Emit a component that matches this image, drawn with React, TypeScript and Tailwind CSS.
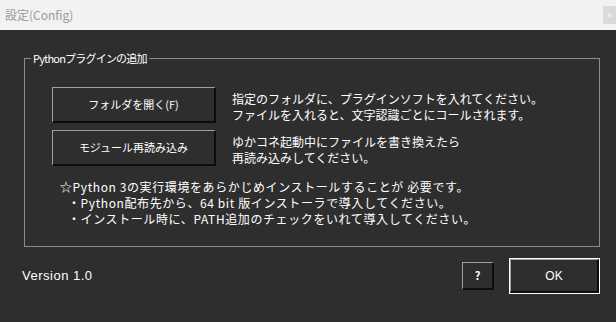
import React from "react";

const bevel =
  "border-t border-l border-t-[#a0a0a0] border-l-[#a0a0a0] border-b-2 border-r-2 border-b-[#0c0c0c] border-r-[#0c0c0c] bg-[#2e2e2e] text-white";

const Row: React.FC<{ label: string; lines: string[]; className?: string }> = ({
  label,
  lines,
  className = "",
}) => (
  <div className={`flex items-end gap-[16px] ${className}`}>
    <button
      className={`${bevel} w-[164px] h-[36px] shrink-0 text-[11px] leading-none`}
    >
      {label}
    </button>
    <div className="text-[12px] leading-[16px] text-white">
      {lines.map((l) => (
        <div key={l}>{l}</div>
      ))}
    </div>
  </div>
);

export default function App() {
  return (
    <div className="w-[616px] h-[322px] bg-[#2e2e2e] flex flex-col overflow-hidden font-['Noto_Sans_CJK_JP',sans-serif]">
      {/* title bar */}
      <div className="h-[30px] shrink-0 bg-[#f2f2f2] flex items-center justify-between">
        <span className="pl-[5px] text-[12px] text-[#9a9a9a]">設定(Config)</span>
        <div className="w-[13px] h-[18px] bg-[#dadada] flex items-center justify-center text-[8px] text-[#f2f2f2]">
          ✕
        </div>
      </div>

      {/* group box */}
      <fieldset className="ml-[24px] mr-[16px] mt-[21px] h-[196px] border border-[#8c8c8c] pl-[6px] min-w-0">
        <legend className="px-[2px] text-[11px] leading-[14px] tracking-[-0.8px] text-white">
          Pythonプラグインの追加
        </legend>
        <div className="pl-[21px] pt-[22px]">
          <Row
            label="フォルダを開く(F)"
            lines={[
              "指定のフォルダに、プラグインソフトを入れてください。",
              "ファイルを入れると、文字認識ごとにコールされます。",
            ]}
          />
          <Row
            className="mt-[7px]"
            label="モジュール再読み込み"
            lines={["ゆかコネ起動中にファイルを書き換えたら", "再読み込みしてください。"]}
          />
          <div className="mt-[13px] pl-[8px] text-[12px] leading-[16px] tracking-[0.6px] text-white">
            <div>☆Python 3の実行環境をあらかじめインストールすることが 必要です。</div>
            <div className="pl-[8px]">・Python配布先から、64 bit 版インストーラで導入してください。</div>
            <div className="pl-[8px]">・インストール時に、PATH追加のチェックをいれて導入してください。</div>
          </div>
        </div>
      </fieldset>

      {/* footer */}
      <div className="mt-[11px] pl-[22px] pr-[16px] flex items-center">
        <span className="flex-1 text-[13px] tracking-[0.5px] text-white font-['Liberation_Sans',sans-serif]">
          Version 1.0
        </span>
        <button className={`${bevel} w-[32px] h-[28px] text-[11px] font-bold`}>?</button>
        <div className="ml-[15px] border border-white">
          <button
            className={`${bevel} w-[89px] h-[34px] block text-[12px] font-['Liberation_Sans',sans-serif]`}
          >
            OK
          </button>
        </div>
      </div>
    </div>
  );
}
